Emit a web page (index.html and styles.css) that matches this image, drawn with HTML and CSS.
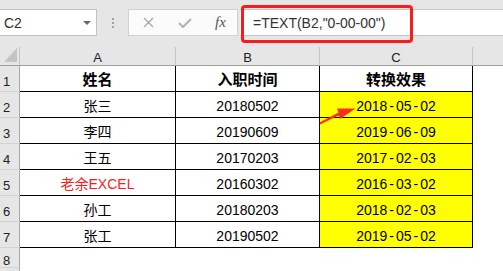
FILE: index.html
```html
<!DOCTYPE html>
<html lang="zh-CN">
<head>
    <meta charset="UTF-8">
    <meta name="viewport" content="width=device-width, initial-scale=1.0">
    <title>TEXT 函数转换日期</title>
    <link rel="stylesheet" href="styles.css">
</head>
<body>
    <div class="excel">
        <div class="formula-bar">
            <div class="name-box">
                <span class="cell-ref">C2</span>
                <span class="caret"></span>
            </div>
            <div class="grip"><i></i><i></i><i></i></div>
            <div class="fx-box">
                <svg class="btn-cancel" width="11" height="11" viewBox="0 0 11 11">
                    <path d="M1 1 L10 10 M10 1 L1 10" stroke="#a9a9a9" stroke-width="1.4" fill="none"/>
                </svg>
                <svg class="btn-enter" width="14" height="10" viewBox="0 0 14 10">
                    <path d="M1 5 L5 9 L13 1" stroke="#b5b5b5" stroke-width="2.2" fill="none"/>
                </svg>
                <span class="fx">fx</span>
            </div>
            <div class="formula-input">
                <span class="formula-text">=TEXT(B2,"0-00-00")</span>
                <div class="callout"></div>
            </div>
        </div>

        <div class="sheet">
            <div class="corner">
                <svg width="13" height="14" viewBox="0 0 13 14"><polygon points="0,14 13,14 13,0" fill="#c4c4c4"/></svg>
            </div>
            <div class="col-head">A</div>
            <div class="col-head">B</div>
            <div class="col-head">C</div>
            <div class="col-head blank"></div>

            <div class="row-head">1</div>
            <div class="cell head">姓名</div>
            <div class="cell head">入职时间</div>
            <div class="cell head">转换效果</div>
            <div class="cell empty"></div>

            <div class="row-head">2</div>
            <div class="cell">张三</div>
            <div class="cell">20180502</div>
            <div class="cell result">2018<span class="dash">-</span>05<span class="dash">-</span>02</div>
            <div class="cell empty"></div>

            <div class="row-head">3</div>
            <div class="cell">李四</div>
            <div class="cell">20190609</div>
            <div class="cell result">2019<span class="dash">-</span>06<span class="dash">-</span>09</div>
            <div class="cell empty"></div>

            <div class="row-head">4</div>
            <div class="cell">王五</div>
            <div class="cell">20170203</div>
            <div class="cell result">2017<span class="dash">-</span>02<span class="dash">-</span>03</div>
            <div class="cell empty"></div>

            <div class="row-head">5</div>
            <div class="cell red">老余EXCEL</div>
            <div class="cell">20160302</div>
            <div class="cell result">2016<span class="dash">-</span>03<span class="dash">-</span>02</div>
            <div class="cell empty"></div>

            <div class="row-head">6</div>
            <div class="cell">孙工</div>
            <div class="cell">20180203</div>
            <div class="cell result">2018<span class="dash">-</span>02<span class="dash">-</span>03</div>
            <div class="cell empty"></div>

            <div class="row-head">7</div>
            <div class="cell">张工</div>
            <div class="cell">20190502</div>
            <div class="cell result">2019<span class="dash">-</span>05<span class="dash">-</span>02</div>
            <div class="cell empty"></div>

            <div class="row-head">8</div>
            <div class="cell empty"></div>
            <div class="cell empty"></div>
            <div class="cell empty"></div>
            <div class="cell empty"></div>

            <!-- row 9 is only a sliver at the bottom edge -->
            <div class="row-head"></div>
            <div class="cell empty"></div>
            <div class="cell empty"></div>
            <div class="cell empty"></div>
            <div class="cell empty"></div>
        </div>

        <!-- annotation arrow pointing at C2 -->
        <svg class="arrow" width="40" height="24" viewBox="318 104 40 24">
            <polygon points="320,124.5 338.5,115.5 340,119 355.5,108.5 337,108.5 338.5,112.5 319.5,122.5" fill="#f5301e"/>
        </svg>
    </div>
</body>
</html>
```

FILE: styles.css
```css
* {
    box-sizing: border-box;
}
body {
    margin: 0;
    font-family: "Liberation Sans", "Noto Sans CJK SC", sans-serif;
    background-color: #fff;
    overflow: hidden;
}
.excel {
    position: relative;
    width: 503px;
    height: 271px;
    overflow: hidden;
}

/* formula bar */
.formula-bar {
    display: flex;
    height: 47px;
    padding-top: 9px;
    background-color: #e6e6e6;
}
.name-box {
    width: 97px;
    height: 27px;
    display: flex;
    align-items: center;
    justify-content: space-between;
    padding: 0 5px 0 4px;
    background-color: #fff;
    border: 1px solid #c3c3c3;
    border-left: none;
}
.cell-ref {
    font-size: 14px;
    color: #2e2e2e;
}
.caret {
    width: 0;
    height: 0;
    border-top: 4px solid #6a6a6a;
    border-left: 4px solid transparent;
    border-right: 4px solid transparent;
}
.grip {
    width: 31px;
    height: 27px;
    display: flex;
    flex-direction: column;
    align-items: center;
    justify-content: center;
    gap: 2px;
}
.grip i {
    display: block;
    width: 2px;
    height: 2px;
    background-color: #a3a3a3;
}
.fx-box {
    width: 110px;
    height: 27px;
    display: flex;
    align-items: center;
    gap: 24px;
    padding-left: 14px;
    background-color: #fbfbfb;
    border: 1px solid #d2d2d2;
}
.fx {
    margin-left: -1px;
    font-family: "Liberation Serif", serif;
    font-style: italic;
    font-size: 15px;
    color: #555;
}
.formula-input {
    position: relative;
    flex: 1;
    height: 27px;
    margin-left: 2px;
    display: flex;
    align-items: center;
    padding-left: 13px;
    background-color: #fff;
    border-top: 1px solid #c6c6c6;
    border-bottom: 1px solid #c6c6c6;
}
.formula-text {
    font-size: 14px;
    color: #333;
}
.callout {
    position: absolute;
    left: 1px;
    top: -5px;
    width: 172px;
    height: 38px;
    border: 3px solid #fa1b1b;
    border-radius: 4px;
}

/* sheet grid */
.sheet {
    display: grid;
    grid-template-columns: 20px 156px 144px 153px 1fr;
    grid-template-rows: 19px repeat(7, 26px) 20px 3px;
    height: 224px;
}
.corner {
    display: flex;
    align-items: flex-end;
    justify-content: flex-end;
    padding: 0 2px 3px 0;
    background-color: #e6e6e6;
    border-right: 1px solid #c6c6c6;
    border-bottom: 1px solid #9f9f9f;
}
.col-head {
    display: flex;
    align-items: center;
    justify-content: center;
    padding-top: 2px;
    font-size: 13px;
    color: #222;
    background-color: #e6e6e6;
    border-right: 1px solid #c6c6c6;
    border-bottom: 1px solid #9f9f9f;
}
.col-head.blank {
    border-right: none;
}
.row-head {
    display: flex;
    align-items: center;
    padding: 6px 0 0 3px;
    font-size: 13px;
    color: #222;
    background-color: #e6e6e6;
    border-right: 1px solid #a8a8a8;
    border-bottom: 1px solid #d3d3d3;
}
.cell {
    display: flex;
    align-items: center;
    justify-content: center;
    padding-top: 2px;
    font-size: 14px;
    line-height: 16px;
    color: #000;
    border-right: 1px solid #000;
    border-bottom: 1px solid #000;
}
.cell.head {
    font-size: 15px;
    font-weight: bold;
}
.cell.result {
    background-color: #ffff00;
}
.cell.red {
    color: #fb1c1c;
}
.cell.empty {
    border: none;
    padding: 0;
}
.dash {
    margin: 0 2px;
}
.arrow {
    position: absolute;
    left: 318px;
    top: 104px;
}
```
